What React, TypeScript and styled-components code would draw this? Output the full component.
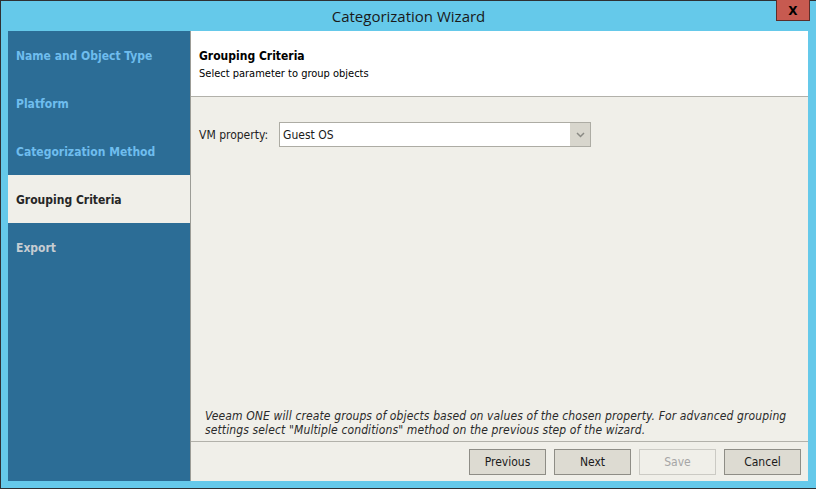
import styled, { createGlobalStyle } from 'styled-components';

const GlobalStyle = createGlobalStyle`
  html, body {
    margin: 0;
    padding: 0;
    background: #ffffff;
  }
  body {
    font-family: "DejaVu Sans Condensed", "DejaVu Sans", sans-serif;
  }
`;

const Window = styled.div`
  width: 816px;
  height: 489px;
  box-sizing: border-box;
  background: #65c9ea;
  border: 1px solid #2e3033;
  border-right: none;
  display: flex;
  flex-direction: column;
`;

const TitleBar = styled.div`
  position: relative;
  height: 30px;
  display: flex;
  align-items: center;
  justify-content: center;
  font-family: "Open Sans", "Noto Sans", sans-serif;
  font-size: 15px;
  color: #1a1a1a;
`;

const CloseButton = styled.div`
  position: absolute;
  top: -1px;
  right: 6px;
  width: 34px;
  height: 21px;
  box-sizing: border-box;
  padding-top: 2px;
  background: #c75a50;
  border: 1px solid #5c2e2a;
  border-top: none;
  display: flex;
  align-items: center;
  justify-content: center;
  font-family: "DejaVu Sans", sans-serif;
  font-weight: bold;
  font-size: 12px;
  color: #000;
`;

const Body = styled.div`
  flex: 1;
  display: flex;
  margin: 0 8px 7px 7px;
  min-height: 0;
`;

const Sidebar = styled.div`
  width: 182px;
  background: #2c6d96;
  border-right: 1px solid #9c9c96;
  display: flex;
  flex-direction: column;
`;

const StepItem = styled.div<{ $state: 'done' | 'active' | 'pending' }>`
  height: 48px;
  display: flex;
  align-items: center;
  padding: 2px 0 0 8px;
  box-sizing: border-box;
  font-size: 12px;
  font-weight: bold;
  background: ${(p) => (p.$state === 'active' ? '#f0efe9' : 'transparent')};
  color: ${(p) =>
    p.$state === 'active' ? '#262626' : p.$state === 'done' ? '#6fbdee' : '#c6ccd2'};
`;

const Main = styled.div`
  flex: 1;
  display: flex;
  flex-direction: column;
  background: #f0efe9;
`;

const Header = styled.div`
  height: 66px;
  box-sizing: border-box;
  background: #ffffff;
  border-bottom: 1px solid #b2b1aa;
  padding: 17px 8px 0;
`;

const HeaderTitle = styled.div`
  font-size: 12px;
  font-weight: bold;
  color: #000;
  line-height: 16px;
`;

const HeaderSub = styled.div`
  font-size: 11px;
  color: #000;
  line-height: 16px;
  margin-top: 2px;
`;

const Content = styled.div`
  flex: 1;
  display: flex;
  flex-direction: column;
  padding: 25px 8px 0;
`;

const FieldRow = styled.div`
  display: flex;
  align-items: center;
  gap: 11px;
`;

const Label = styled.span`
  font-size: 12px;
  color: #1e1e1e;
`;

const Select = styled.div`
  width: 312px;
  height: 25px;
  box-sizing: border-box;
  background: #fff;
  border: 1px solid #adaca4;
  display: flex;
  align-items: stretch;
`;

const SelectValue = styled.div`
  flex: 1;
  display: flex;
  align-items: center;
  padding-left: 3px;
  font-size: 12px;
  color: #1a1a1a;
`;

const SelectArrow = styled.div`
  width: 20px;
  background: #d8d6cd;
  display: flex;
  align-items: center;
  justify-content: center;
`;

const Note = styled.div`
  margin-top: auto;
  padding: 0 6px 4px;
  font-size: 12px;
  font-style: italic;
  line-height: 14px;
  letter-spacing: 0.12px;
  color: #2a2a2a;
`;

const Footer = styled.div`
  height: 40px;
  box-sizing: border-box;
  border-top: 1px solid #b2b1aa;
  display: flex;
  justify-content: flex-end;
  align-items: center;
  gap: 8px;
  padding-right: 7px;
`;

const Button = styled.button<{ $disabled?: boolean }>`
  width: 77px;
  height: 26px;
  box-sizing: border-box;
  font-family: "DejaVu Sans Condensed", "DejaVu Sans", sans-serif;
  font-size: 12px;
  background: ${(p) => (p.$disabled ? '#f0efe9' : '#dddbd2')};
  border: 1px solid ${(p) => (p.$disabled ? '#cbcac4' : '#8e8d86')};
  color: ${(p) => (p.$disabled ? '#a6a6a6' : '#1a1a1a')};
  padding: 0;
`;

const steps: { label: string; state: 'done' | 'active' | 'pending' }[] = [
  { label: 'Name and Object Type', state: 'done' },
  { label: 'Platform', state: 'done' },
  { label: 'Categorization Method', state: 'done' },
  { label: 'Grouping Criteria', state: 'active' },
  { label: 'Export', state: 'pending' },
];

export default function App() {
  return (
    <>
      <GlobalStyle />
      <Window>
        <TitleBar>
          Categorization Wizard
          <CloseButton>X</CloseButton>
        </TitleBar>
        <Body>
          <Sidebar>
            {steps.map((s) => (
              <StepItem key={s.label} $state={s.state}>
                {s.label}
              </StepItem>
            ))}
          </Sidebar>
          <Main>
            <Header>
              <HeaderTitle>Grouping Criteria</HeaderTitle>
              <HeaderSub>Select parameter to group objects</HeaderSub>
            </Header>
            <Content>
              <FieldRow>
                <Label>VM property:</Label>
                <Select>
                  <SelectValue>Guest OS</SelectValue>
                  <SelectArrow>
                    <svg width="9" height="6" viewBox="0 0 9 6">
                      <path d="M1 1 L4.5 4.5 L8 1" fill="none" stroke="#8a8a84" strokeWidth="1.5" />
                    </svg>
                  </SelectArrow>
                </Select>
              </FieldRow>
              <Note>
                Veeam ONE will create groups of objects based on values of the chosen property. For advanced grouping
                settings select "Multiple conditions" method on the previous step of the wizard.
              </Note>
            </Content>
            <Footer>
              <Button>Previous</Button>
              <Button>Next</Button>
              <Button $disabled>Save</Button>
              <Button>Cancel</Button>
            </Footer>
          </Main>
        </Body>
      </Window>
    </>
  );
}
